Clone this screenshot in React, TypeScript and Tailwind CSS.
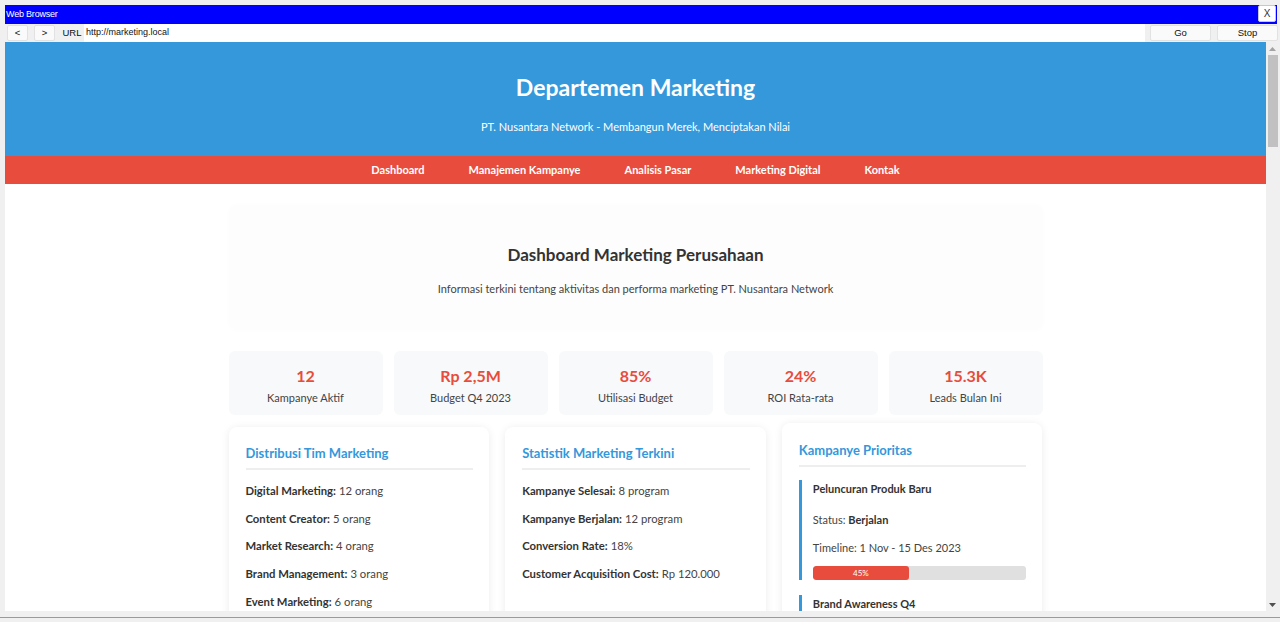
const team = [
  ["Digital Marketing:", "12 orang"],
  ["Content Creator:", "5 orang"],
  ["Market Research:", "4 orang"],
  ["Brand Management:", "3 orang"],
  ["Event Marketing:", "6 orang"],
];

const stats = [
  ["Kampanye Selesai:", "8 program"],
  ["Kampanye Berjalan:", "12 program"],
  ["Conversion Rate:", "18%"],
  ["Customer Acquisition Cost:", "Rp 120.000"],
];

const summary = [
  ["12", "Kampanye Aktif"],
  ["Rp 2,5M", "Budget Q4 2023"],
  ["85%", "Utilisasi Budget"],
  ["24%", "ROI Rata-rata"],
  ["15.3K", "Leads Bulan Ini"],
];

const nav = ["Dashboard", "Manajemen Kampanye", "Analisis Pasar", "Marketing Digital", "Kontak"];

function Card({ title, children, className = "" }: { title: string; children: React.ReactNode; className?: string }) {
  return (
    <div className={"bg-white rounded-lg shadow-[0_1px_8px_rgba(0,0,0,0.08)] pl-[17px] pr-4 pt-[17px] pb-4 " + className}>
      <h3 className="text-[13px] leading-[18px] font-bold text-[#3498db] pb-[6px] border-b-2 border-[#eeeeee]">{title}</h3>
      {children}
    </div>
  );
}

function Row({ label, value }: { label: string; value: string }) {
  return (
    <p className="text-[11.3px] leading-[16px] text-[#444] h-[27.75px] flex items-center">
      <b className="text-[#333] mr-[3px]">{label}</b>
      {value}
    </p>
  );
}

export default function App() {
  return (
    <div className="w-[1280px] h-[622px] overflow-hidden bg-[#f0f0f0] flex flex-col font-['Liberation_Sans',Arial,sans-serif]">
      <div className="h-[5px]" />
      {/* title bar */}
      <div className="ml-[5px] mr-[3px] h-[19px] bg-[#0000ff] flex items-center justify-between">
        <span className="text-white text-[9px] pl-px tracking-[-0.2px]">Web Browser</span>
        <button className="w-[18px] h-[17px] bg-white border border-[#c8c8c8] rounded-[2px] text-[10px] text-[#333] leading-none -mt-[2px] mr-px">
          X
        </button>
      </div>
      {/* toolbar */}
      <div className="h-[18px] flex items-center text-[9.5px] text-[#111]">
        <button className="ml-[7px] w-[21px] h-[16px] bg-[#fafafa] border border-[#e2e2e2] rounded-[2px] leading-none">&lt;</button>
        <button className="ml-[6px] w-[21px] h-[16px] bg-[#fafafa] border border-[#e2e2e2] rounded-[2px] leading-none">&gt;</button>
        <span className="ml-[5px] w-[24px] text-center">URL</span>
        <div className="w-[1061px] h-[18px] bg-white flex items-center pl-[2px] text-[9px]">http://marketing.local</div>
        <button className="ml-[5px] w-[61px] h-[16px] bg-[#fafafa] border border-[#e2e2e2] rounded-[2px] leading-none">Go</button>
        <button className="ml-[6px] w-[61px] h-[16px] bg-[#fafafa] border border-[#e2e2e2] rounded-[2px] leading-none">Stop</button>
      </div>
      {/* viewport */}
      <div className="flex h-[569px]">
        <div className="ml-[5px] w-[1261px] h-[569px] overflow-hidden bg-white font-['Lato',sans-serif] text-[#333]">
          <header className="h-[114px] bg-[#3498db] text-white text-center pt-[31px]">
            <h1 className="text-[23px] leading-[28px] font-bold">Departemen Marketing</h1>
            <p className="text-[11px] leading-[16px] mt-[18px]">PT. Nusantara Network - Membangun Merek, Menciptakan Nilai</p>
          </header>
          <nav className="h-[28px] bg-[#e74c3c] flex items-center justify-center gap-[44px] pt-px">
            {nav.map((n) => (
              <a key={n} className="text-white text-[11px] font-bold">{n}</a>
            ))}
          </nav>
          <main className="w-[814px] mx-auto pt-[21px]">
            <section className="h-[125px] rounded-lg bg-[#fdfdfe] shadow-[0_0_6px_rgba(0,0,0,0.015)] text-center pt-[38px]">
              <h2 className="text-[17px] leading-[24px] font-bold text-[#333]">Dashboard Marketing Perusahaan</h2>
              <p className="text-[11px] leading-[16px] mt-[14px] text-[#444]">
                Informasi terkini tentang aktivitas dan performa marketing PT. Nusantara Network
              </p>
            </section>
            <div className="grid grid-cols-5 gap-[11px] mt-[21px]">
              {summary.map(([v, l]) => (
                <div key={l} className="h-[64px] bg-[#f8f9fa] rounded-md text-center pt-[15px]">
                  <div className="text-[16px] leading-[20px] font-bold text-[#e74c3c]">{v}</div>
                  <div className="text-[11px] leading-[14px] mt-[5px] text-[#444]">{l}</div>
                </div>
              ))}
            </div>
            <div className="grid grid-cols-3 gap-4 mt-[12px] items-start">
              <Card title="Distribusi Tim Marketing" className="h-[300px]">
                <div className="mt-[7px]">
                  {team.map(([l, v]) => (
                    <Row key={l} label={l} value={v} />
                  ))}
                </div>
              </Card>
              <Card title="Statistik Marketing Terkini" className="h-[300px]">
                <div className="mt-[7px]">
                  {stats.map(([l, v]) => (
                    <Row key={l} label={l} value={v} />
                  ))}
                </div>
              </Card>
              <Card title="Kampanye Prioritas" className="-mt-[4px] pt-[18px]">
                <div className="mt-[13px] border-l-[3px] border-[#3498db] pl-[11px] pb-0">
                  <h4 className="text-[11px] leading-[16px] font-bold text-[#333] pt-[1px]">Peluncuran Produk Baru</h4>
                  <p className="text-[11px] leading-[16px] text-[#444] mt-[15px]">
                    Status: <b className="text-[#333]">Berjalan</b>
                  </p>
                  <p className="text-[11px] leading-[16px] text-[#444] mt-[12px]">Timeline: 1 Nov - 15 Des 2023</p>
                  <div className="mt-[10px] h-[14px] bg-[#e0e0e0] rounded-[3px] overflow-hidden">
                    <div className="h-full w-[45%] bg-[#e74c3c] rounded-[3px] text-white text-[8px] leading-[14px] text-center">45%</div>
                  </div>
                </div>
                <div className="mt-[15px] border-l-[3px] border-[#3498db] pl-[11px] h-[40px]">
                  <h4 className="text-[11px] leading-[16px] font-bold text-[#333] pt-[1px]">Brand Awareness Q4</h4>
                </div>
              </Card>
            </div>
          </main>
        </div>
        {/* scrollbar */}
        <div className="w-[13px] h-[569px] flex flex-col items-center">
          <div className="h-[13px] flex items-center justify-center">
            <svg width="7" height="4" viewBox="0 0 7 4"><path d="M0 4 L3.5 0 L7 4 Z" fill="#a3a3a3" /></svg>
          </div>
          <div className="w-[10px] h-[92px] bg-[#c1c1c1] ml-[1px]" />
          <div className="flex-1" />
          <div className="h-[13px] flex items-center justify-center">
            <svg width="7" height="4" viewBox="0 0 7 4"><path d="M0 0 L3.5 4 L7 0 Z" fill="#505050" /></svg>
          </div>
        </div>
      </div>
      <div className="h-[6px]" />
      <div className="h-px bg-[#9a9a9a]" />
    </div>
  );
}
